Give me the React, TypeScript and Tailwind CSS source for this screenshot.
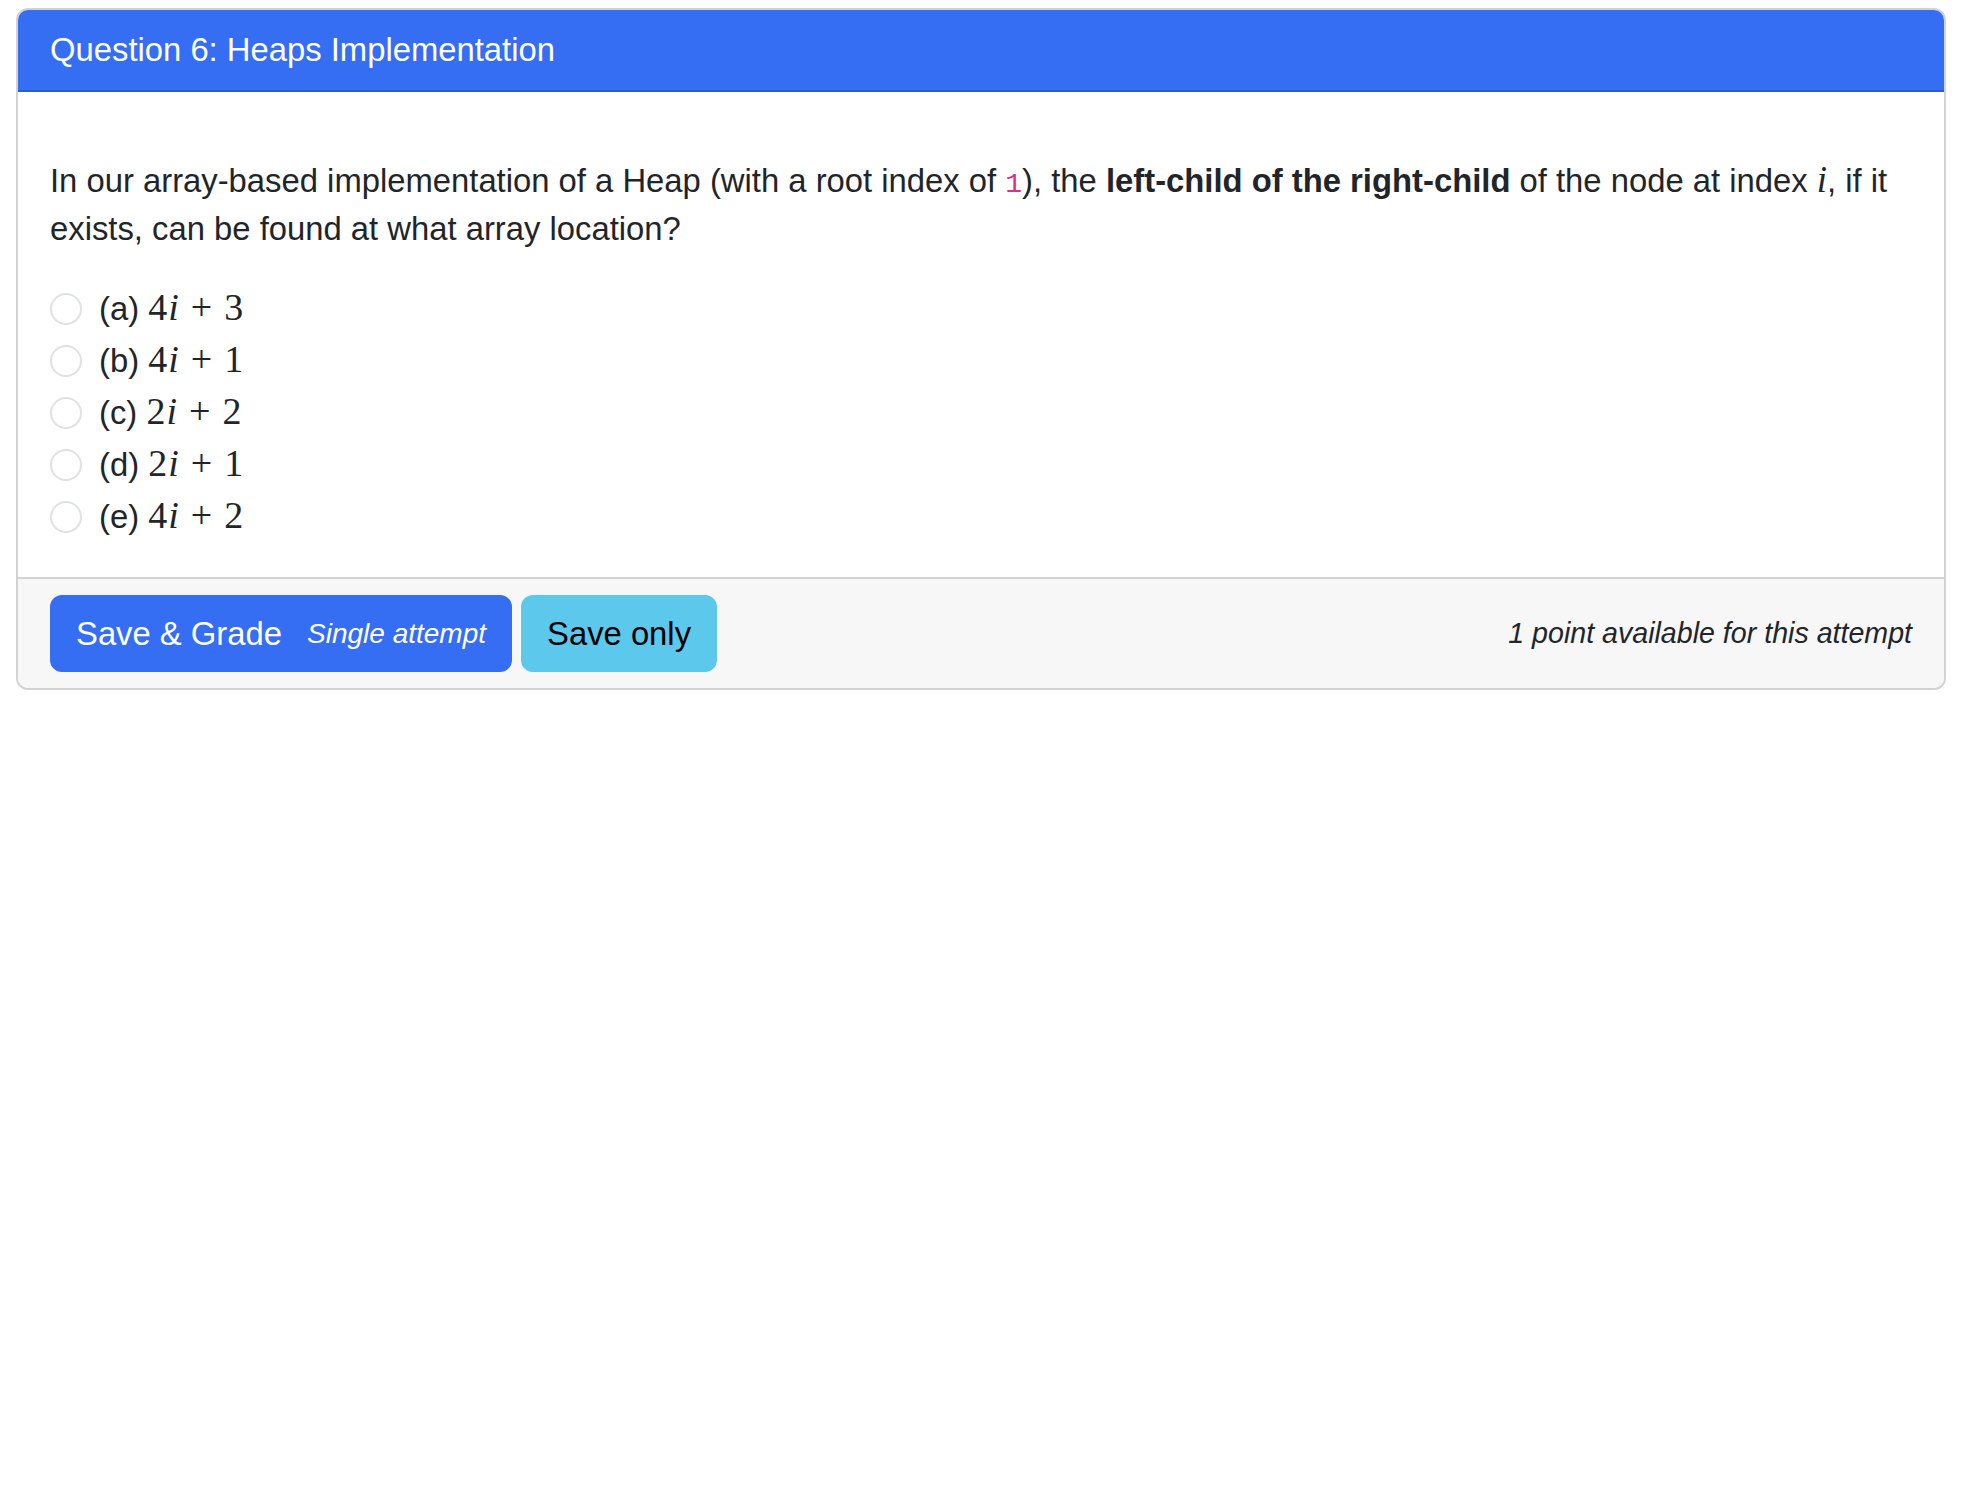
const options = [
  { label: "a", a: "4", b: "3" },
  { label: "b", a: "4", b: "1" },
  { label: "c", a: "2", b: "2" },
  { label: "d", a: "2", b: "1" },
  { label: "e", a: "4", b: "2" },
];

function MathI() {
  return (
    <span className="font-['Liberation_Serif','DejaVu_Serif',serif] text-[37px] italic leading-[0]">i</span>
  );
}

function Expr({ a, b }: { a: string; b: string }) {
  return (
    <span className="font-['Liberation_Serif','DejaVu_Serif',serif] text-[38px] leading-[0]">
      {a}
      <span className="ml-[1px] italic">i</span>
      <span className="mx-[12px]">+</span>
      {b}
    </span>
  );
}

export default function App() {
  return (
    <div className="min-h-screen bg-white font-['Liberation_Sans',Arial,sans-serif] text-[#212529]">
      <div className="ml-[16px] mr-[26px] pt-[8px]">
        <div className="overflow-hidden rounded-[12px] border-2 border-[#d2d2d2]">
          {/* Header */}
          <div className="border-b-2 border-[#2c5ccc] bg-[#356df3] px-[32px] py-[16px] text-[32.8px] leading-[48px] text-white">
            Question 6: Heaps Implementation
          </div>

          {/* Body */}
          <div className="bg-white px-[32px] pb-[32px] pt-[65px] text-[32.8px] leading-[48px]">
            <p className="mb-[32px]">
              In our array-based implementation of a Heap (with a root index of{" "}
              <code className="font-['Liberation_Mono',monospace] text-[28px] leading-[0] text-[#d63384]">1</code>), the{" "}
              <b className="font-bold">left-child of the right-child</b> of the node at index <MathI />, if it exists,
              can be found at what array location?
            </p>

            <div>
              {options.map((o) => (
                <label key={o.label} className="mb-[4px] flex h-[48px] items-center">
                  <span className="h-[32px] w-[32px] shrink-0 rounded-full border-2 border-[#dee2e6] bg-white" />
                  <span className="ml-[17px]">
                    ({o.label}) <Expr a={o.a} b={o.b} />
                  </span>
                </label>
              ))}
            </div>
          </div>

          {/* Footer */}
          <div className="flex items-center justify-between border-t-2 border-[#d2d2d2] bg-[#f7f7f7] px-[32px] py-[16px]">
            <div className="flex items-center gap-[9px]">
              <button className="flex h-[77px] items-center rounded-[12px] border-2 border-[#356df3] bg-[#356df3] px-[24px] text-[32.8px] leading-[48px] text-white">
                Save &amp; Grade
                <small className="ml-[25px] text-[28px] italic">Single attempt</small>
              </button>
              <button className="flex h-[77px] items-center rounded-[12px] border-2 border-[#5bc8ec] bg-[#5bc8ec] px-[24px] text-[32.8px] leading-[48px] text-black">
                Save only
              </button>
            </div>
            <small className="text-[28.6px] italic text-[#212529]">1 point available for this attempt</small>
          </div>
        </div>
      </div>
    </div>
  );
}
